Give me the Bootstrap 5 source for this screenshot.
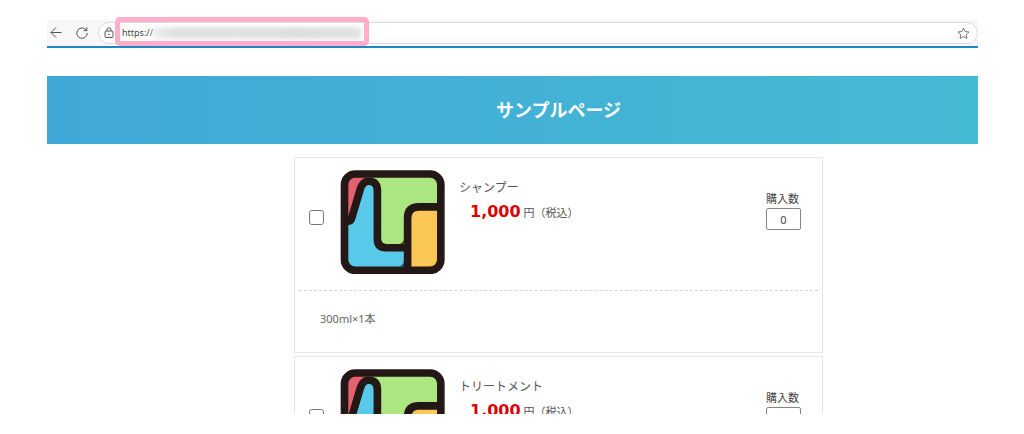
<!DOCTYPE html>
<html lang="ja">
<head>
<meta charset="utf-8">
<meta name="viewport" content="width=device-width, initial-scale=1">
<title>サンプルページ</title>
<link href="https://cdn.jsdelivr.net/npm/bootstrap@5.3.0/dist/css/bootstrap.min.css" rel="stylesheet">
<style>
body { font-family: "Noto Sans", "Noto Sans CJK JP", sans-serif; font-size: 11px; line-height: 20px; color: #555; background: #fff; }
.frame { padding: 20px 46px 20px 47px; }
.toolbar { height: 28px; padding-left: 3px; background: #f7f7f7; border-bottom: 2px solid #2185c8; }
.tool-btn { width: 14px; height: 14px; margin-right: 11px; color: #555; }
.tool-btn + .tool-btn { margin-right: 9px; }
.address { height: 22px; border: 1px solid #dcdcdc; border-radius: 11px; background: #fff; padding: 0 7px 0 5px; }
.url { font-size: 9px; color: #444; margin-left: 8px; }
.url-mask { width: 208px; height: 12px; background: linear-gradient(90deg, #eee, #dfdfdf 12%, #e2e2e2 40%, #dedede 70%, #e2e2e2); filter: blur(2px); }
.marker { top: -6px; left: 16px; width: 254px; height: 29px; border: 5px solid #ffadc8; border-radius: 5px; pointer-events: none; }
.banner { margin-top: 28px; height: 68px; padding-left: 92px; background: linear-gradient(90deg, #40a8d8, #45bad3); }
.banner h1 { font-size: 18px; line-height: 24px; }
.listing { margin-top: 13px; padding-left: 92px; min-height: 0; }
.goods { width: 100%; max-width: 529px; }
.item { border: 1px solid #e6e6e6; margin-bottom: 3px; }
.item-top { padding: 12px 21px 16px 14px; }
.pick { width: 15px; height: 15px; margin: 40px 16px 0 0; border: 1px solid #767676; border-radius: 2px; }
.logo { width: 105px; height: 104px; margin-right: 14px; }
.item-name { font-size: 12px; line-height: 20px; margin: 8px 0 4px; color: #555; }
.price { font-family: "DejaVu Sans", sans-serif; font-size: 16px; color: #d00; margin-left: 11px; }
.qty { width: 35px; padding-top: 20px; }
.qty label { line-height: 18px; color: #444; }
.qty input { height: 22px; border: 1px solid #858585; border-radius: 2px; color: #444; }
.item-note { border-top: 1px dashed #d5d5d5; margin: 0 4px; padding: 18px 21px 23px; color: #666; }
</style>
</head>
<body>
<svg class="d-none" aria-hidden="true">
  <symbol id="logo" viewBox="0 0 313 313">
    <rect x="11" y="11" width="291" height="291" rx="34" fill="#ace681"/>
    <path d="M14 150V45Q14 12 45 12H84L34 152Z" fill="#e5616f"/>
    <path d="M12 152H32L62 55Q68 34 84 34Q111 34 111 62V208Q111 234 137 234H202V302H45Q12 302 12 270Z" fill="#58c9e9"/>
    <path d="M202 302V145Q202 111 236 111H302V270Q302 302 270 302Z" fill="#fac755"/>
    <g fill="none" stroke="#231815" stroke-width="23">
      <path d="M14 153Q29 156 33 147L60 56Q68 34 84 34Q111 34 111 62V208Q111 234 137 234H202M302 111H236Q202 111 202 145V302"/>
      <rect x="12" y="12" width="290" height="290" rx="32"/>
    </g>
    <path d="M23 39Q23 23 39 23H23ZM290 39Q290 23 274 23H290ZM23 274Q23 290 39 290H23ZM290 274Q290 290 274 290H290ZM190 274Q190 290 174 290H190ZM122 206Q122 222 138 222H122ZM190 206Q190 222 174 222H190Z" fill="#231815"/>
  </symbol>
</svg>
<div class="frame vh-100 d-flex flex-column overflow-hidden">
  <header class="toolbar d-flex align-items-center flex-shrink-0">
    <button type="button" class="tool-btn btn p-0 border-0 d-flex" aria-label="戻る">
      <svg width="12" height="14" viewBox="0 0 12 14" fill="none" stroke="currentColor"><path d="M11.500 6.500H.7M6 1.500L1 6.500L6 11.500"/></svg>
    </button>
    <button type="button" class="tool-btn btn p-0 border-0 d-flex" aria-label="更新">
      <svg width="14" height="14" viewBox="0 0 14 14" fill="none" stroke="currentColor"><path d="M11.500 4.500A5.200 5.200 0 1 0 12.200 7M11.800 1.300V4.600H8.500"/></svg>
    </button>
    <div class="address position-relative d-flex align-items-center flex-grow-1">
      <svg width="10" height="12" viewBox="0 0 10 12" fill="none" stroke="#555"><rect x="1" y="4" width="8" height="6.500" rx="1"/><path d="M3 4V2.800A2 2 0 0 1 7 2.800V4"/><circle cx="5" cy="7.300" r=".4"/></svg>
      <span class="url">https://</span>
      <span class="url-mask"></span>
      <button type="button" class="btn p-0 border-0 d-flex ms-auto" aria-label="お気に入り">
        <svg width="13" height="13" viewBox="0 0 13 13" fill="none" stroke="#777" stroke-linejoin="round"><path d="M6.500 1L8.100 4.500L12 5L9.200 7.600L9.900 11.500L6.500 9.600L3.100 11.500L3.800 7.600L1 5L4.900 4.500Z"/></svg>
      </button>
      <span class="marker position-absolute"></span>
    </div>
  </header>

  <div class="banner d-flex align-items-center justify-content-center flex-shrink-0">
    <h1 class="m-0 fw-bold text-white">サンプルページ</h1>
  </div>

  <main class="listing flex-grow-1 overflow-hidden">
    <div class="goods mx-auto">
      <section class="item">
        <div class="item-top d-flex align-items-start">
          <input type="checkbox" class="pick form-check-input flex-shrink-0" aria-label="シャンプー">
          <svg class="logo flex-shrink-0" aria-hidden="true"><use href="#logo"/></svg>
          <div class="flex-grow-1">
            <h2 class="item-name fw-normal">シャンプー</h2>
            <div><strong class="price">1,000</strong> 円（税込）</div>
          </div>
          <div class="qty flex-shrink-0">
            <label class="d-block text-nowrap" for="qty1">購入数</label>
            <input id="qty1" type="text" inputmode="numeric" class="w-100 p-0 text-center d-block" value="0">
          </div>
        </div>
        <div class="item-note">300ml×1本</div>
      </section>
      <section class="item">
        <div class="item-top d-flex align-items-start">
          <input type="checkbox" class="pick form-check-input flex-shrink-0" aria-label="トリートメント">
          <svg class="logo flex-shrink-0" aria-hidden="true"><use href="#logo"/></svg>
          <div class="flex-grow-1">
            <h2 class="item-name fw-normal">トリートメント</h2>
            <div><strong class="price">1,000</strong> 円（税込）</div>
          </div>
          <div class="qty flex-shrink-0">
            <label class="d-block text-nowrap" for="qty2">購入数</label>
            <input id="qty2" type="text" inputmode="numeric" class="w-100 p-0 text-center d-block" value="0">
          </div>
        </div>
      </section>
    </div>
  </main>
</div>
<script src="https://cdn.jsdelivr.net/npm/bootstrap@5.3.0/dist/js/bootstrap.bundle.min.js"></script>
</body>
</html>
